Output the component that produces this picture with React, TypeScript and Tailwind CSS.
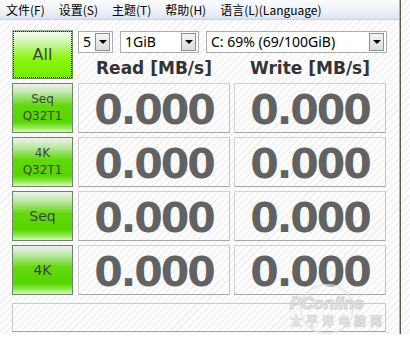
import React from "react";

const stripes =
  "bg-[repeating-linear-gradient(135deg,#fdfdfd_0px,#fdfdfd_3.5px,#f1f1f1_3.5px,#f1f1f1_5px)]";

function Arrow() {
  return (
    <div className="flex h-[18px] w-[15px] items-center justify-center border border-[#8e8f8f] bg-[linear-gradient(to_bottom,#f4f4f4,#dcdcdc)]">
      <div className="h-0 w-0 border-l-[4px] border-r-[4px] border-t-[4px] border-l-transparent border-r-transparent border-t-black" />
    </div>
  );
}

function Combo({ cls, text }: { cls: string; text: string }) {
  return (
    <div
      className={
        "flex h-[22px] items-center justify-between border border-[#a9acb2] bg-white pl-[4px] pr-[2px] text-[14px] text-black " +
        cls
      }
      style={{ fontFamily: '"Noto Sans", sans-serif' }}
    >
      <span className="leading-none">{text}</span>
      <Arrow />
    </div>
  );
}

const btnFont = { fontFamily: '"Comic Sans MS", "DejaVu Sans", sans-serif' };

function TestButton({ lines }: { lines: string[] }) {
  const small = lines.length > 1;
  return (
    <div className="flex h-[50px] w-[61px] flex-col items-center justify-center border border-[#6f846f] bg-[linear-gradient(to_bottom,#eef2ee_0%,#b8e6a0_20%,#62d80c_45%,#56d600_78%,#8ee850_90%,#d6fab0_100%)] text-[#3a463a]">
      {lines.map((l) => (
        <div
          key={l}
          className={small ? "text-[12px] leading-[17px]" : "text-[14px] leading-[17px]"}
          style={btnFont}
        >
          {l}
        </div>
      ))}
    </div>
  );
}

function ValueBox() {
  return (
    <div className="flex h-[50px] w-[152px] items-center justify-center border border-[#d2d2d2] border-b-[#a6a6a6] border-r-[#c4c4c4] pt-[4px]">
      <span
        className="text-[41px] font-bold leading-none tracking-[-2px] text-[#626262]"
        style={{ fontFamily: '"DejaVu Sans", sans-serif' }}
      >
        0.000
      </span>
    </div>
  );
}

export default function App() {
  const rows = [["Seq", "Q32T1"], ["4K", "Q32T1"], ["Seq"], ["4K"]];
  const menu = ["文件(F)", "设置(S)", "主题(T)", "帮助(H)", "语言(L)(Language)"];
  return (
    <div className="relative h-[353px] w-[410px] overflow-hidden bg-white">
      <div className="flex h-[334px]">
        <div className={"flex w-[399px] flex-col " + stripes}>
          <div
            className="flex h-[20px] items-center gap-[14px] border-b border-[#c9d0e2] bg-[linear-gradient(to_bottom,#fbfcfe,#f0f3fa_50%,#dde4f3)] pl-[6px] pt-[1px] text-[12px] text-black"
            style={{ fontFamily: '"Noto Sans CJK SC", "Noto Sans", sans-serif' }}
          >
            {menu.map((m) => (
              <span key={m} className="leading-none">
                {m}
              </span>
            ))}
          </div>

          <div className="flex flex-col pl-[12px] pt-[10px]">
            <div className="flex">
              <div className="h-[49px] w-[61px] border border-[#6f846f] border-t-[#9fb09f] border-l-[#9fb09f]">
                <div className="flex h-full w-full items-center justify-center border border-dotted border-[#202020] bg-[linear-gradient(to_bottom,#f6fbf2_0%,#ccf4a8_25%,#9af630_50%,#84f400_70%,#74ec00_100%)]">
                  <span className="text-[16px] leading-none text-[#3a423a]" style={btnFont}>
                    All
                  </span>
                </div>
              </div>
              <div className="ml-[5px] flex flex-col">
                <div className="mt-[1px] flex gap-[7px]">
                  <Combo cls="w-[35px]" text="5" />
                  <Combo cls="w-[79px]" text="1GiB" />
                  <Combo cls="w-[181px]" text="C: 69% (69/100GiB)" />
                </div>
                <div
                  className="mt-[5px] flex gap-[4px] text-[17px] font-bold leading-[20px] text-[#333333]"
                  style={{ fontFamily: '"DejaVu Sans", sans-serif' }}
                >
                  <div className="w-[152px] text-center">Read [MB/s]</div>
                  <div className="w-[152px] text-center">Write [MB/s]</div>
                </div>
              </div>
            </div>

            <div className="mt-[4px] flex flex-col gap-[4px]">
              {rows.map((r, i) => (
                <div key={i} className="flex">
                  <TestButton lines={r} />
                  <div className="ml-[5px] flex gap-[4px]">
                    <ValueBox />
                    <ValueBox />
                  </div>
                </div>
              ))}
            </div>

            <div className="mt-[8px] h-[29px] w-[374px] border border-[#cacaca] border-b-[#a2a2a2]" />
          </div>
        </div>
        <div className="w-[1px] bg-[#b6b2a2]" />
        <div className="w-[1px] bg-[#5e5a4a]" />
        <div className={"flex-1 " + stripes} />
      </div>

      {/* watermark */}
      <div className="pointer-events-none absolute left-[300px] top-[284px] h-[50px] w-[54px] rounded-full border-[2px] border-[#e4e4e4] opacity-70" />
      <div className="pointer-events-none absolute left-[290px] top-[296px] flex flex-col items-start opacity-80">
        <span
          className="text-[17px] font-bold italic leading-[16px] text-[#e8e8e8] [-webkit-text-stroke:1px_#c6c6c6]"
          style={{ fontFamily: '"Liberation Sans", sans-serif' }}
        >
          PConline
        </span>
        <span
          className="mt-[2px] text-[12px] font-bold leading-[13px] tracking-[4px] text-[#e8e8e8] [-webkit-text-stroke:0.6px_#c6c6c6]"
          style={{ fontFamily: '"Noto Sans CJK SC", sans-serif' }}
        >
          太平洋电脑网
        </span>
      </div>
    </div>
  );
}
